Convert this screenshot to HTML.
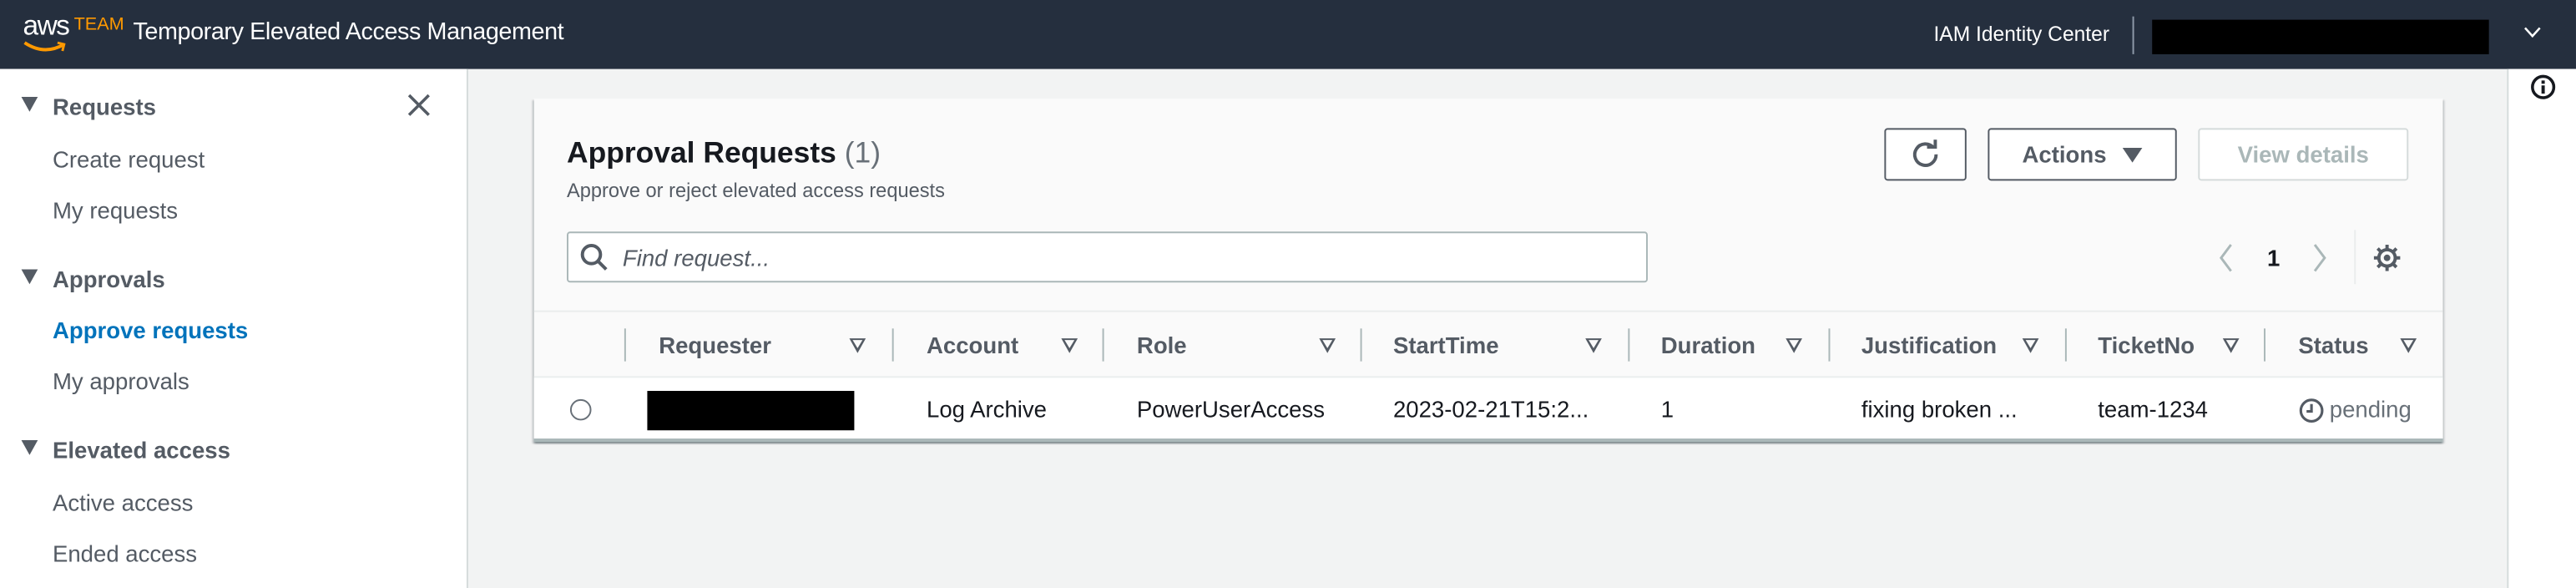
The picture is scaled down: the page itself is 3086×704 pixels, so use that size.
<!DOCTYPE html>
<html><head><meta charset="utf-8"><style>
*{margin:0;padding:0;box-sizing:border-box}
html,body{width:3086px;height:704px;overflow:hidden;background:#f2f3f3}
#w{width:1568px;height:358px;transform:scale(1.9681,1.9665);transform-origin:0 0;position:relative;font-family:"Liberation Sans",sans-serif;color:#16191f}
.a{position:absolute;white-space:nowrap}
#hd{position:absolute;left:0;top:0;width:1568px;height:42px;background:#252f3e}
#sb{position:absolute;left:0;top:42px;width:285px;height:316px;background:#fff;border-right:1px solid #d5dbdb}
#rp{position:absolute;left:1526px;top:42px;width:42px;height:316px;background:#fff;border-left:1px solid #d5dbdb}
.nh{font-weight:bold;font-size:14px;color:#545b64}
.ni{font-size:14px;color:#545b64}
#card{position:absolute;left:325px;top:60px;width:1162px;height:209px;background:#fafafa;box-shadow:0 1px 1px rgba(0,28,36,.3),1px 1px 1px rgba(0,28,36,.15),-1px 1px 1px rgba(0,28,36,.15)}
.btn{position:absolute;top:18px;height:32px;border:1px solid #545b64;background:#fff;border-radius:2px;font-weight:bold;font-size:14px;color:#545b64;text-align:center;line-height:30px}
.th{font-weight:bold;font-size:14px;color:#545b64;top:142px}
.sep{position:absolute;top:140px;width:1px;height:20px;background:#aab7b8}
.tri{position:absolute;top:146px;width:0;height:0;border-left:5px solid transparent;border-right:5px solid transparent;border-top:9px solid #545b64}
.tri::after{content:"";position:absolute;left:-3px;top:-8px;border-left:3px solid transparent;border-right:3px solid transparent;border-top:5px solid #fafafa}
.td{font-size:14px;color:#16191f;top:181px}
</style></head><body><div id="w">
<div id="hd">
 <div class="a" style="left:14px;top:6px;font-size:17px;color:#fff;letter-spacing:-.8px">aws</div>
 <div class="a" style="left:45px;top:9px;font-size:11px;color:#ff9900">TEAM</div>
 <svg class="a" style="left:14px;top:25px" width="28" height="8"><path d="M1 1 Q13 9 25 2" stroke="#ff9900" stroke-width="2" fill="none"/><path d="M21 1 L25 2 L24 6" stroke="#ff9900" stroke-width="1.5" fill="none"/></svg>
 <div class="a" style="left:81px;top:12px;font-size:14.6px;color:#fff;letter-spacing:-.2px">Temporary Elevated Access Management</div>
 <div class="a" style="left:1177px;top:14px;font-size:12.5px;color:#fff">IAM Identity Center</div>
 <div class="a" style="left:1298px;top:10px;width:1px;height:23px;background:#8d99a8"></div>
 <div class="a" style="left:1310px;top:12px;width:205px;height:21px;background:#000"></div>
 <svg class="a" style="left:1536px;top:16px" width="11" height="8"><path d="M1 1 L5.5 6 L10 1" stroke="#fff" stroke-width="1.3" fill="none"/></svg>
</div>
<div id="sb">
 <div class="a" style="left:13px;top:17px;border-left:5px solid transparent;border-right:5px solid transparent;border-top:9px solid #545b64"></div>
 <div class="a nh" style="left:32px;top:15px">Requests</div>
 <svg class="a" style="left:248px;top:15px" width="14" height="14"><path d="M1 1L13 13M13 1L1 13" stroke="#545b64" stroke-width="1.8"/></svg>
 <div class="a ni" style="left:32px;top:47px">Create request</div>
 <div class="a ni" style="left:32px;top:78px">My requests</div>
 <div class="a" style="left:13px;top:122px;border-left:5px solid transparent;border-right:5px solid transparent;border-top:9px solid #545b64"></div>
 <div class="a nh" style="left:32px;top:120px">Approvals</div>
 <div class="a" style="left:32px;top:151px;font-size:14px;font-weight:bold;color:#0073bb">Approve requests</div>
 <div class="a ni" style="left:32px;top:182px">My approvals</div>
 <div class="a" style="left:13px;top:226px;border-left:5px solid transparent;border-right:5px solid transparent;border-top:9px solid #545b64"></div>
 <div class="a nh" style="left:32px;top:224px">Elevated access</div>
 <div class="a ni" style="left:32px;top:256px">Active access</div>
 <div class="a ni" style="left:32px;top:287px">Ended access</div>
</div>
<div id="rp"><svg class="a" style="left:13px;top:3px" width="16" height="16"><circle cx="8" cy="8" r="6.5" stroke="#16191f" stroke-width="1.8" fill="none"/><rect x="7" y="7" width="2" height="5" fill="#16191f"/><rect x="7" y="4" width="2" height="2" fill="#16191f"/></svg></div>
<div id="card">
 <div class="a" style="left:20px;top:23px;font-size:18px;font-weight:bold">Approval Requests <span style="font-weight:normal;color:#687078">(1)</span></div>
 <div class="a" style="left:20px;top:49px;font-size:12px;color:#545b64">Approve or reject elevated access requests</div>
 <div class="btn" style="left:822px;width:50px"><svg style="margin-top:6px" width="18" height="18"><path d="M14 5 A6.5 6.5 0 1 0 15.5 9" stroke="#545b64" stroke-width="2" fill="none"/><path d="M10 4.5 L15 4.5 L15 0" stroke="#545b64" stroke-width="2" fill="none"/></svg></div>
 <div class="btn" style="left:885px;width:115px">Actions <span style="display:inline-block;margin-left:6px;border-left:6px solid transparent;border-right:6px solid transparent;border-top:9px solid #545b64;vertical-align:0"></span></div>
 <div class="btn" style="left:1013px;width:128px;border-color:#d5dbdb;color:#aab7b8">View details</div>
 <div class="a" style="left:20px;top:81px;width:658px;height:31px;background:#fff;border:1px solid #aab7b8;border-radius:2px"></div>
 <svg class="a" style="left:28px;top:88px" width="18" height="18"><circle cx="7" cy="7" r="5.5" stroke="#545b64" stroke-width="2" fill="none"/><path d="M11 11 L16 16" stroke="#545b64" stroke-width="2"/></svg>
 <div class="a" style="left:54px;top:89px;font-size:14px;font-style:italic;color:#545b64">Find request...</div>
 <svg class="a" style="left:1025px;top:88px" width="10" height="18"><path d="M8 1 L2 9 L8 17" stroke="#aab7b8" stroke-width="1.5" fill="none"/></svg>
 <div class="a" style="left:1055px;top:89px;font-size:14px;font-weight:bold">1</div>
 <svg class="a" style="left:1082px;top:88px" width="10" height="18"><path d="M2 1 L8 9 L2 17" stroke="#aab7b8" stroke-width="1.5" fill="none"/></svg>
 <div class="a" style="left:1108px;top:80px;width:1px;height:33px;background:#eaeded"></div>
 <svg class="a" style="left:1119px;top:88px" width="18" height="18"><circle cx="9" cy="9" r="5" stroke="#545b64" stroke-width="2" fill="none"/><circle cx="9" cy="9" r="2" fill="#545b64"/><path d="M9 1V4M9 14V17M1 9H4M14 9H17M3.3 3.3L5.5 5.5M12.5 12.5L14.7 14.7M3.3 14.7L5.5 12.5M12.5 5.5L14.7 3.3" stroke="#545b64" stroke-width="2"/></svg>
 <div class="a" style="left:0;top:129px;width:1162px;height:1px;background:#eaeded"></div>
 <div class="sep" style="left:55px"></div><div class="sep" style="left:218px"></div><div class="sep" style="left:346px"></div><div class="sep" style="left:503px"></div><div class="sep" style="left:666px"></div><div class="sep" style="left:788px"></div><div class="sep" style="left:932px"></div><div class="sep" style="left:1053px"></div>
 <div class="a th" style="left:76px">Requester</div><div class="a th" style="left:239px">Account</div><div class="a th" style="left:367px">Role</div><div class="a th" style="left:523px">StartTime</div><div class="a th" style="left:686px">Duration</div><div class="a th" style="left:808px">Justification</div><div class="a th" style="left:952px">TicketNo</div><div class="a th" style="left:1074px">Status</div>
 <div class="tri" style="left:192px"></div><div class="tri" style="left:321px"></div><div class="tri" style="left:478px"></div><div class="tri" style="left:640px"></div><div class="tri" style="left:762px"></div><div class="tri" style="left:906px"></div><div class="tri" style="left:1028px"></div><div class="tri" style="left:1136px"></div>
 <div class="a" style="left:0;top:169px;width:1162px;height:40px;background:#fff;border-top:1px solid #eaeded;border-bottom:2px solid #aab7b8"></div>
 <div class="a" style="left:22px;top:183px;width:13px;height:13px;border:1px solid #687078;border-radius:50%"></div>
 <div class="a" style="left:69px;top:178px;width:126px;height:24px;background:#000"></div>
 <div class="a td" style="left:239px">Log Archive</div><div class="a td" style="left:367px">PowerUserAccess</div><div class="a td" style="left:523px">2023-02-21T15:2...</div><div class="a td" style="left:686px">1</div><div class="a td" style="left:808px">fixing broken ...</div><div class="a td" style="left:952px">team-1234</div>
 <svg class="a" style="left:1074px;top:182px" width="16" height="16"><circle cx="8" cy="8" r="6.5" stroke="#545b64" stroke-width="1.6" fill="none"/><path d="M8 4V8.5H5" stroke="#545b64" stroke-width="1.6" fill="none"/></svg>
 <div class="a td" style="left:1093px;color:#687078">pending</div>
</div>
</div></body></html>
